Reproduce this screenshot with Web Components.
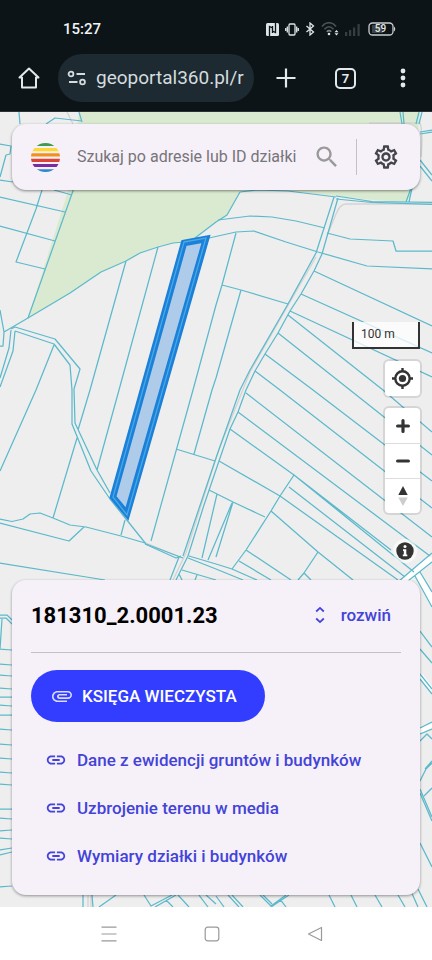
<!DOCTYPE html>
<html lang="pl">
<head>
<meta charset="utf-8">
<meta name="viewport" content="width=device-width, initial-scale=1">
<title>geoportal360.pl</title>
<style>
  html, body { margin: 0; height: 100%; }
  body { font-family: Roboto, "Noto Sans", sans-serif; background: #fff; }
</style>
</head>
<body>
<geo-phone>
  <status-bar slot="top" time="15:27" battery="59"></status-bar>
  <browser-bar slot="top" address="geoportal360.pl/r" tabs="7"></browser-bar>
  <map-view>
    <parcel-map slot="map"></parcel-map>
    <search-bar slot="search" hint="Szukaj po adresie lub ID działki"></search-bar>
    <map-controls slot="controls" scale="100 m"></map-controls>
    <parcel-card slot="card">
      <span slot="title">181310_2.0001.23</span>
      <span slot="toggle">rozwiń</span>
      <span slot="action">KSIĘGA WIECZYSTA</span>
      <parcel-link>Dane z ewidencji gruntów i budynków</parcel-link>
      <parcel-link>Uzbrojenie terenu w media</parcel-link>
      <parcel-link>Wymiary działki i budynków</parcel-link>
    </parcel-card>
  </map-view>
  <system-nav slot="bottom"></system-nav>
</geo-phone>

<script>
const BASE = `
  :host, * { box-sizing: border-box; }
  button { appearance: none; border: 0; margin: 0; padding: 0; background: none; font: inherit; color: inherit;
    display: flex; align-items: center; justify-content: center; cursor: pointer; }
  input { border: 0; margin: 0; padding: 0; background: none; outline: 0; min-width: 0; }
  svg { display: block; flex: none; }
`;

function define(name, render) {
  customElements.define(name, class extends HTMLElement {
    constructor() {
      super();
      this.attachShadow({ mode: 'open' });
    }
    connectedCallback() {
      const t = document.createElement('template');
      t.innerHTML = render(this);
      const style = document.createElement('style');
      style.textContent = BASE;
      this.shadowRoot.replaceChildren(style, t.content.cloneNode(true));
    }
  });
}

define('geo-phone', () => `
  <style>
    :host { display: flex; flex-direction: column; min-height: 100vh; }
    header { background: #0d1418; color: #e3e8ea; border-bottom: 1px solid #2b3236; }
    main { flex: 1; display: grid; }
  </style>
  <header><slot name="top"></slot></header>
  <main><slot></slot></main>
  <slot name="bottom"></slot>`);

define('status-bar', el => `
  <style>
    :host { display: flex; align-items: center; justify-content: space-between; height: 54px; padding: 4px 36px 0 63px; }
    time { font-size: 15px; font-weight: 500; color: #f1f3f4; }
    .icons { display: flex; align-items: center; gap: 6px; }
    .wifi { margin-right: -1px; }
    .battery { position: relative; width: 28px; height: 14px; display: grid; place-items: center;
      font-size: 10px; font-weight: 500; line-height: 14px; padding-right: 3px; }
    .battery svg { position: absolute; inset: 0; }
    .battery span { position: relative; }
  </style>
  <time>${el.getAttribute('time')}</time>
  <div class="icons">
    <svg width="13" height="13" viewBox="0 0 13 13"><rect width="13" height="13" rx="1.500" fill="#dfe4e6"/><path d="M3.500 13V3.500l3 1.500v5M9.500 0v9.500l-3-1.500V3" fill="none" stroke="#0d1418" stroke-width="1.300"/></svg>
    <svg width="14" height="13" viewBox="0 0 14 13" fill="none" stroke="#dfe4e6" stroke-width="1.300"><rect x="4" y="1" width="6" height="11" rx="1"/><path d="M2.300 3.500v6M11.700 3.500v6M.7 5v3M13.300 5v3"/></svg>
    <svg width="10" height="14" viewBox="0 0 10 14" fill="none" stroke="#dfe4e6" stroke-width="1.300"><path d="M1.500 4l7 6L5 13V1l3.500 3-7 6"/></svg>
    <svg class="wifi" width="18" height="14" viewBox="0 0 18 14" fill="none"><path d="M1 4.500C5-.5 11-.5 15 4.500M3.500 7.300c3-3.400 6-3.400 9 0" stroke="#4b5357" stroke-width="1.700"/><path d="M5.800 9.800c1.500-1.600 3-1.600 4.400 0" stroke="#7b8285" stroke-width="1.600"/><circle cx="8" cy="12" r="1.300" fill="#dfe4e6"/><path d="M15.500 8l2 2.300h-4zM15.500 13.600l2-2.300h-4z" fill="#dfe4e6"/></svg>
    <svg width="18" height="13" viewBox="0 0 18 13" fill="#363e42"><path d="M1 9h2.200v4H1zM5 7h2.200v6H5zM9 4.500h2.200V13H9z"/><path d="M13.500 1h2.200v12h-2.200z"/></svg>
    <div class="battery">
      <svg width="28" height="14" viewBox="0 0 28 14"><rect x="1" y="1" width="24" height="12" rx="3.500" fill="#0d1418" stroke="#c9ced0" stroke-width="1.300"/><path d="M4 3h11v8H4z" fill="#3b4347"/><path d="M26 4.500c1.600.8 1.600 4.200 0 5z" fill="#c9ced0"/></svg>
      <span>${el.getAttribute('battery')}</span>
    </div>
  </div>`);

define('browser-bar', el => `
  <style>
    :host { display: flex; align-items: center; padding-bottom: 9px; }
    button { height: 48px; flex: none; width: 58px; }
    .add { width: 63px; }
    .tabs { width: 57px; }
    .badge { width: 21px; height: 21px; border: 2px solid #e3e8ea; border-radius: 5px; font-size: 13px; font-weight: 700; line-height: 17px; }
    label { flex: 1; min-width: 0; height: 48px; border-radius: 24px; background: #1d2a31; display: flex; align-items: center; gap: 9px; padding: 0 9px; }
    input { flex: 1; width: 0; color: #d5dcdf; font: 19px/28px Roboto, "Noto Sans", sans-serif; height: 28px; }
  </style>
  <button aria-label="Strona główna"><svg width="24" height="24" viewBox="0 0 24 24" fill="none" stroke="#e3e8ea" stroke-width="2" stroke-linejoin="round" stroke-linecap="round"><path d="M5 21.500V11.500H2.500L12 2.500l9.500 9H19v10z"/></svg></button>
  <label>
    <svg width="20" height="16" viewBox="0 0 20 16" fill="none" stroke="#d5dcdf" stroke-width="1.800"><circle cx="4" cy="4" r="2.400"/><path d="M9.500 4H18M2 12h8.500"/><circle cx="15.500" cy="12" r="2.400"/></svg>
    <input type="text" aria-label="Adres strony" value="${el.getAttribute('address')}">
  </label>
  <button class="add" aria-label="Nowa karta"><svg width="20" height="20" viewBox="0 0 20 20" stroke="#e3e8ea" stroke-width="2.200"><path d="M10 .5v19M.5 10h19"/></svg></button>
  <button class="tabs" aria-label="Karty"><span class="badge">${el.getAttribute('tabs')}</span></button>
  <button aria-label="Menu"><svg width="6" height="20" viewBox="0 0 6 20" fill="#e3e8ea"><circle cx="3" cy="3" r="2.400"/><circle cx="3" cy="10" r="2.400"/><circle cx="3" cy="17" r="2.400"/></svg></button>`);

define('map-view', () => `
  <style>
    :host { display: grid; position: relative; overflow: hidden; background: #eee; isolation: isolate; }
    .map { position: absolute; inset: 0; z-index: -1; }
    .overlay { display: flex; flex-direction: column; padding: 12px; }
    .controls { margin-top: auto; padding: 24px 0 17px; }
  </style>
  <div class="map"><slot name="map"></slot></div>
  <div class="overlay">
    <slot name="search"></slot>
    <div class="controls"><slot name="controls"></slot></div>
    <slot name="card"></slot>
  </div>`);

define('parcel-map', () => `
  <style>
    :host { display: block; height: 100%; }
    svg { width: 100%; height: 100%; }
  </style>
  <svg viewBox="0 112 432 795" preserveAspectRatio="xMidYMin slice" fill="none" role="img" aria-label="Mapa działek">
    <path fill="#eee" d="M0 112h432v795H0z"/>
    <path fill="#daead0" d="M79 112H420L411 195 406 202 372 200 336 196 288 191H240L227 215 216 222 195 238 181 242 158 246 140 253 126 261 101 272 70 293 28 318 68 191z"/>
    <g stroke="#d3d3d3" stroke-width="1.300">
      <path d="M67 112l6 12M432 204H346q-6 0-10 10l-9 22M316 257L290 302 250 372 219 449 186 553 173 580M88 895v12M91 895v12M146 543l36 15M369 123h51q3 8 1 34"/>
    </g>
    <path stroke="#fff" stroke-width="7" d="M404 582L432 558M417 573L434 604"/>
    <path stroke="#fff" stroke-width="5" d="M419 731l14-6M420 675l12 16"/>
    <g stroke="#5cb9cb" stroke-width="1.250" stroke-linejoin="round">
      <path d="M19 112l1 12M46 124l9-6 27 3M79 112l3 10M0 144l11 2-1 8-4 1-6 22M0 180l13 2M54 190l18 5M0 197l65 15M42 190l-6 19-20 53 29 7M0 226l55 15M74 188L28 318"/>
      <path d="M4 332L28 318 70 293 101 272 126 261 140 253 158 247 173 243 184 242M195 238L216 222 227 215 240 192 257 190 288 191 336 197M0 310l4 22-1 14H0"/>
      <path d="M126 261L90 390 78 430M77 438L53 518M158 247L119 390 97 470M11 329l4-2 40 12 25 30-6 20 1 34 22 47 13 23M15 331l39 13 16 21 2 25v34l19 47 19 28 16 20 20 25 37 14M11 330l-2 18-9 30M15 331l-2 20-13 36M54 345L36 390 0 471"/>
      <path d="M209 238l27-6 18-1 32 11 32 10 49 14 65 3M218 220l32-4 22 1 24 4 29 7M327 233l23 6 43 2 3 10h36M236 233L222 285 216 305 193 390 151 541M222 285l19 5 47 14M241 290L216 378 212 390 194 454M176 449l39 12"/>
      <path d="M334 197L316 253 288 304 250 370 240 390 216 458 183 556M338 198L322 254 314 271 301 294 290 311 278 333 265 354 255 371 246 390 238 412 230 429 219 461 204 505 188 556M336 196l36 5.500 60 1M336 199l36 3.500 60 2M406 202l5-14M409 202l3-14M400 112l2 12M403 112l1 12M419 112l-3 12M422 112l-3 12M420 132l12-2M420 134l12-2M420 160l12 15M420 166l12 15"/>
      <path d="M314 271l118 55M301 294l131 59M290 311l142 66M288 315L383 390l49 42M278 333L350 390l82 65M265 354L313 390l119 91M255 371L280 390 432 508M246 393L432 537M238 412L430 556M230 429l64 46 97 75M294 475L414 572M219 461l61 35 118 84M289 487L405 577M294 475L280 496 271 511 246 550 232 569M209 490l24 12 32 15M271 511l47 41 35 28M318 552l-14 21-6 7M304 573l7 7M246 550l45 30M239 561l32 19M233 502l-17 55M232 503L208 560M217 494l-15 64"/>
      <path d="M145 544l31 14 5-2M189 556l27 8 16 5 25 11M188 558l28 11 27 11M182 570l34 10M179 574l3 6M197 575l-2 5M179 557l-9 23M188 556l-12 24M125 520l-4 15M0 519l12 2.500 11-2.500 7-5 10-1 13 5 17 7 16 2 35 9 24 7M0 523l69 18 15-14M0 563l105 17"/>
      <path d="M399 581L432 553M408 581L432 562M415 576L432 607M420 572L432 592M420 631l12 16M420 649l12 14M420 674l12 15M420 679l12 15M420 728l12-6M420 734l12-5M420 741l7-7 5 5M420 781l6-12 6-6M424 796l8-8M420 789l12 28M420 793l12 28M420 843l12 24M432 761l-7 8"/>
      <path d="M0 615h7l5 5M0 618h6l6 6M2 619L0 649M0 649l12 1M0 664l12 1M0 675l12 1M0 688l12 1M0 697h12M0 705l12 1M0 715h12M0 729l12 1M0 744l12 1M0 758l12 1M0 772l12 1M0 784l12 1M0 809h12M0 818l12 1M0 831l12-1M0 838l12 1M0 850l12-2M0 855l12-3M0 887l12-1"/>
      <path d="M83 895v12M92 895l1 12M99 907l17-12M144 895l7 11 21-11M155 907l21-12M166 900l7 7M178 895l11 12M199 895l9 12M206 895l10 9M216 896l8 11M228 895l11 12M232 895l11 12M260 895l11 11 15-11M263 895l9 9M271 907l18-12M280 899l6 8M329 895l6 12M351 895l6 12M375 895l7 12M398 895l7 12M410 889l8 18M418 889l9 18"/>
    </g>
    <path d="M184 243L206 239 127 514 113 497z" fill="#3c8fe0" fill-opacity=".36" stroke="#1b80d9" stroke-width="6.500"/>
    <path d="M184 242L206 238 127 515 113 497z" stroke="#4aa9e2" stroke-width="1.300"/>
  </svg>`);

define('search-bar', el => `
  <style>
    :host { display: flex; align-items: center; height: 66px; padding: 0 20px 0 19px; border-radius: 14px; background: #f6f1f8;
      box-shadow: 0 1px 3px rgba(0,0,0,.45); }
    label { flex: 1; min-width: 0; display: flex; align-items: center; gap: 17px; }
    input { flex: 1; font: 16px/24px Roboto, "Noto Sans", sans-serif; color: #333; }
    input::placeholder { color: #77747a; opacity: 1; }
    .find { width: 28px; height: 44px; }
    .set { width: 28px; height: 44px; margin-left: 15px; }
    .line { width: 1px; height: 36px; margin-left: 15px; background: #c4c0c7; }
  </style>
  <label>
    <svg width="29" height="29" viewBox="0 0 29 29"><clipPath id="c"><circle cx="14.500" cy="14.500" r="14.500"/></clipPath>
      <g clip-path="url(#c)"><path fill="#439a4b" d="M0 0h29v3H0z"/><path fill="#fdd835" d="M0 5h29v3.200H0z"/><path fill="#f2901d" d="M0 10.300h29v3.300H0z"/><path fill="#dc4437" d="M0 15.700h29V19H0z"/><path fill="#7c2aa0" d="M0 21h29v3H0z"/><path fill="#2c86d2" d="M0 26.300h29V29H0z"/></g></svg>
    <input type="search" aria-label="Szukaj" placeholder="${el.getAttribute('hint')}">
  </label>
  <button class="find" aria-label="Szukaj"><svg width="28" height="28" viewBox="0 0 24 24" fill="#999"><path d="M15.500 14h-.79l-.28-.27C15.410 12.590 16 11.110 16 9.500 16 5.910 13.090 3 9.500 3S3 5.910 3 9.500 5.910 16 9.500 16c1.610 0 3.090-.59 4.230-1.570l.27.28v.79l5 4.990L20.490 19l-4.990-5zm-6 0C7.010 14 5 11.990 5 9.500S7.010 5 9.500 5 14 7.010 14 9.500 11.990 14 9.500 14z"/></svg></button>
  <span class="line"></span>
  <button class="set" aria-label="Ustawienia"><svg width="28" height="28" viewBox="0 0 24 24" fill="#45444a"><path d="M19.430 12.980c.04-.32.07-.64.07-.98 0-.34-.03-.66-.07-.98l2.110-1.650c.19-.15.24-.42.12-.64l-2-3.460c-.09-.16-.26-.25-.44-.25-.06 0-.12.01-.17.03l-2.490 1c-.52-.4-1.080-.73-1.690-.98l-.38-2.650C14.460 2.180 14.250 2 14 2h-4c-.25 0-.46.18-.49.42l-.38 2.650c-.61.25-1.170.59-1.690.98l-2.490-1c-.06-.02-.12-.03-.18-.03-.17 0-.34.09-.43.25l-2 3.460c-.13.22-.07.49.12.64l2.110 1.650c-.04.32-.07.65-.07.98 0 .33.03.66.07.98l-2.110 1.650c-.19.15-.24.42-.12.64l2 3.460c.09.16.26.25.44.25.06 0 .12-.01.17-.03l2.490-1c.52.4 1.080.73 1.690.98l.38 2.650c.03.24.24.42.49.42h4c.25 0 .46-.18.49-.42l.38-2.650c.61-.25 1.170-.59 1.690-.98l2.490 1c.06.02.12.03.18.03.17 0 .34-.09.43-.25l2-3.460c.12-.22.07-.49-.12-.64l-2.110-1.650zm-1.980-1.710c.04.31.05.52.05.73 0 .21-.02.43-.05.73l-.14 1.130.89.7 1.080.84-.7 1.210-1.270-.51-1.040-.42-.9.68c-.43.32-.84.56-1.250.73l-1.060.43-.16 1.130-.2 1.350h-1.400l-.19-1.350-.16-1.130-1.060-.43c-.43-.18-.83-.41-1.230-.71l-.91-.7-1.060.43-1.270.51-.7-1.210 1.080-.84.89-.7-.14-1.130c-.03-.31-.05-.54-.05-.74s.02-.43.05-.73l.14-1.130-.89-.7-1.080-.84.7-1.210 1.270.51 1.040.42.9-.68c.43-.32.84-.56 1.250-.73l1.060-.43.16-1.130.2-1.350h1.390l.19 1.350.16 1.130 1.060.43c.43.18.83.41 1.230.71l.91.7 1.060-.43 1.270-.51.7 1.210-1.070.85-.89.7.14 1.130zM12 8c-2.210 0-4 1.790-4 4s1.790 4 4 4 4-1.790 4-4-1.790-4-4-4zm0 6c-1.100 0-2-.9-2-2s.9-2 2-2 2 .9 2 2-.9 2-2 2z"/></svg></button>`);

define('map-controls', el => `
  <style>
    :host { display: flex; flex-direction: column; align-items: flex-end; gap: 12px; }
    .scale { width: 68px; height: 27px; border: 2px solid #333; border-top: 0; background: rgba(255,255,255,.75);
      font-size: 12px; line-height: 24px; color: #333; padding-left: 7px; }
    .group { width: 35px; border-radius: 4px; background: #fff; box-shadow: 0 0 0 2px rgba(0,0,0,.1); }
    .group button { width: 35px; height: 35px; }
    .group button + button { border-top: 1px solid #ddd; }
    .info { width: 24px; height: 24px; border-radius: 12px; background: rgba(255,255,255,.6); margin: 14px 3px 0 0; }
  </style>
  <div class="scale">${el.getAttribute('scale')}</div>
  <div class="group"><button aria-label="Moja lokalizacja"><svg width="21" height="21" viewBox="0 0 21 21" fill="none" stroke="#333" stroke-width="2.400"><circle cx="10.500" cy="10.500" r="7.200"/><path d="M10.500 0v4M10.500 17v4M0 10.500h4M17 10.500h4"/><circle cx="10.500" cy="10.500" r="3.600" fill="#333" stroke="none"/></svg></button></div>
  <div class="group">
    <button aria-label="Przybliż"><svg width="14" height="14" viewBox="0 0 14 14" stroke="#333" stroke-width="3.200" stroke-linecap="round"><path d="M7 1.600v10.800M1.600 7h10.800"/></svg></button>
    <button aria-label="Oddal"><svg width="14" height="14" viewBox="0 0 14 14" stroke="#333" stroke-width="3.200" stroke-linecap="round"><path d="M1.600 7h10.800"/></svg></button>
    <button aria-label="Obróć na północ"><svg width="10" height="22" viewBox="0 0 10 22"><path fill="#333" d="M5 1l4.700 9H.3z"/><path fill="#ccc" d="M.3 12.500h9.400L5 21z"/></svg></button>
  </div>
  <button class="info" aria-label="Informacje"><svg width="18" height="18" viewBox="0 0 18 18"><circle cx="9" cy="9" r="8.700" fill="#333"/><circle cx="9" cy="4.600" r="1.500" fill="#fff"/><path fill="#fff" d="M7 7.300h3.300v5.200h1v1.700H6.800v-1.700h1V9H7z"/></svg></button>`);

define('parcel-card', () => `
  <style>
    :host { display: block; padding: 13px 19px 15px; border-radius: 14px; background: #f6f1f8; box-shadow: 0 1px 3px rgba(0,0,0,.4); }
    header { display: flex; align-items: center; justify-content: space-between; min-height: 60px; padding-bottom: 15px; border-bottom: 1px solid #c4bfc8; }
    h1 { margin: 0; padding-top: 2px; font-size: 22px; line-height: 32px; font-weight: 700; color: #000; }
    .toggle { gap: 16px; padding: 0 10px 0 0; height: 44px; font-size: 17px; font-weight: 500; line-height: 24px; color: #4343d8; }
    .main { margin: 17px 0 14px; height: 52px; border-radius: 26px; padding: 0 28px 0 19px; gap: 8px; background: #333dff; color: #fff; font-size: 17px; font-weight: 500; }
    nav { display: flex; flex-direction: column; }
  </style>
  <header>
    <h1><slot name="title"></slot></h1>
    <button class="toggle"><svg width="10" height="18" viewBox="0 0 10 18" fill="none" stroke="#4343d8" stroke-width="1.800"><path d="M1.200 5.500L5 1.900l3.800 3.600M1.200 12.500L5 16.100l3.800-3.600"/></svg><slot name="toggle"></slot></button>
  </header>
  <button class="main"><svg width="24" height="24" viewBox="0 0 24 24" fill="#d9dbff"><path d="M2 12.500C2 9.460 4.460 7 7.500 7H18c2.210 0 4 1.790 4 4s-1.790 4-4 4H9.500C8.120 15 7 13.880 7 12.500S8.120 10 9.500 10H17v1.600H9.410c-.75 0-.75 1.700 0 1.700H18c1.300 0 2.400-1 2.400-2.300S19.300 8.600 18 8.600H7.500C5.370 8.600 3.600 10.370 3.600 12.500S5.370 16.400 7.500 16.400H17v1.600H7.500C4.460 18 2 15.540 2 12.500z"/></svg><slot name="action"></slot></button>
  <nav><slot></slot></nav>`);

define('parcel-link', () => `
  <style>
    :host { display: block; }
    a { display: flex; align-items: center; gap: 10px; min-height: 48px; padding-left: 14px; color: #4343d8; text-decoration: none;
      font-size: 17px; line-height: 24px; font-weight: 500; }
  </style>
  <a href="#"><svg width="22" height="22" viewBox="0 0 24 24" fill="#4343d8"><path d="M3.900 12c0-1.710 1.390-3.100 3.100-3.100h4V7H7c-2.760 0-5 2.240-5 5s2.240 5 5 5h4v-1.900H7c-1.710 0-3.100-1.390-3.100-3.100zM8 13h8v-2H8v2zm9-6h-4v1.900h4c1.710 0 3.100 1.390 3.100 3.100s-1.390 3.100-3.100 3.100h-4V17h4c2.760 0 5-2.240 5-5s-2.240-5-5-5z"/></svg><span><slot></slot></span></a>`);

define('system-nav', () => `
  <style>
    :host { display: flex; justify-content: center; height: 53px; padding-right: 8px; background: #fff; }
    button { width: 103px; height: 53px; }
  </style>
  <button aria-label="Ostatnie"><svg width="16" height="16" viewBox="0 0 16 16" stroke="#999" stroke-width="1.200"><path d="M.5 1.200h15M.5 8h15M.5 14.800h15"/></svg></button>
  <button aria-label="Ekran główny"><svg width="16" height="16" viewBox="0 0 16 16" fill="none" stroke="#999" stroke-width="1.200"><rect x="1.200" y="1.200" width="13.600" height="13.600" rx="2.500"/></svg></button>
  <button aria-label="Wstecz"><svg width="16" height="16" viewBox="0 0 16 16" fill="none" stroke="#999" stroke-width="1.200" stroke-linejoin="round"><path d="M14.500 1.500v13L1.500 8z"/></svg></button>`);
</script>
</body>
</html>
